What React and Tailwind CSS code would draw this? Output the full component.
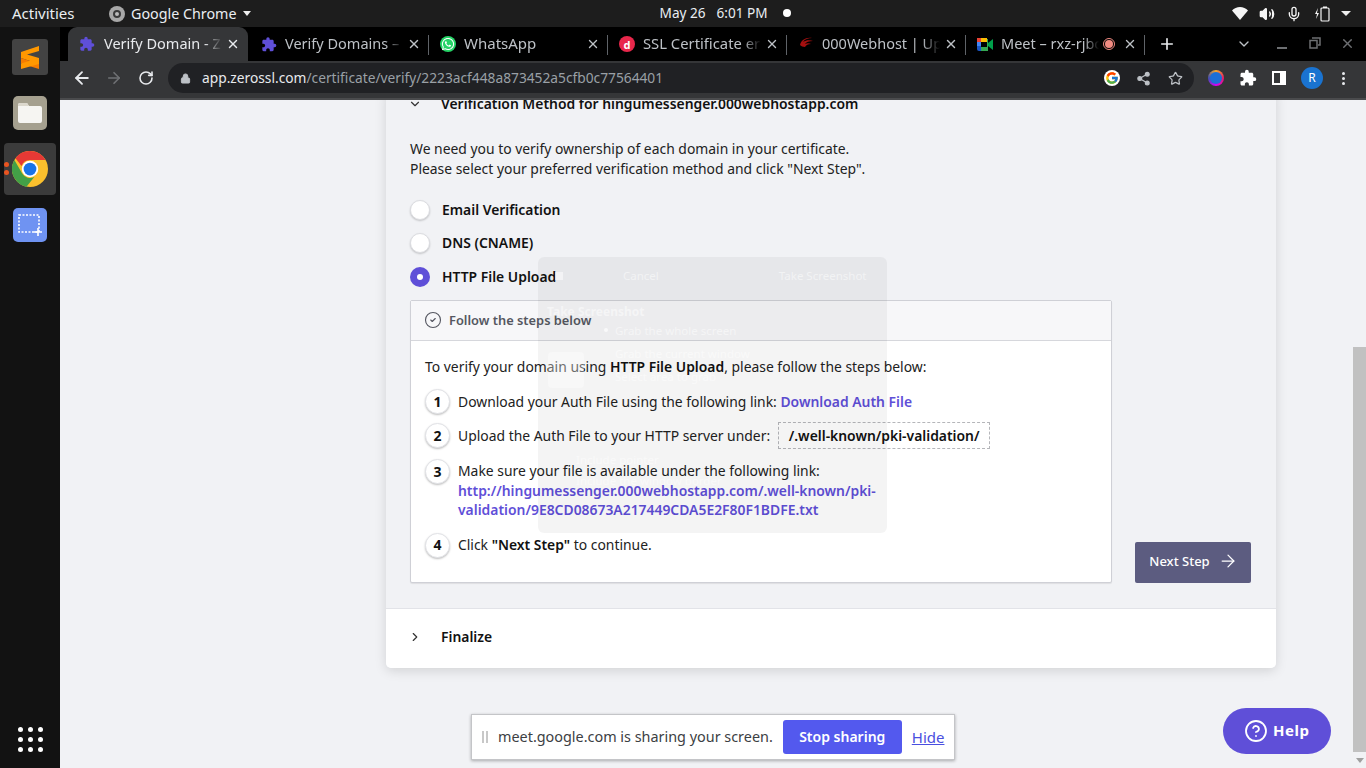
import React from "react";
import { ChevronDown, ChevronRight, X, Plus, ArrowLeft, ArrowRight, RotateCw, Lock, Star, Share2, Mic, Volume2, CircleHelp, CircleCheck } from "lucide-react";
import { MdExtension } from "react-icons/md";
import { FaWhatsapp } from "react-icons/fa";
import { FcGoogle } from "react-icons/fc";

function ChromeLogo({ size = 36 }) {
  return (
    <svg width={size} height={size} viewBox="0 0 48 48">
      <circle cx="24" cy="24" r="24" fill="#fbc02d" />
      <path d="M24 0a24 24 0 0 1 20.8 12H24a12 12 0 0 0-11.3 8L4.6 9.500A24 24 0 0 1 24 0z" fill="#e53935" />
      <path d="M3.200 12 13.600 30a12 12 0 0 0 16.400 4.400L19 48H24A24 24 0 0 1 3.200 12z" fill="#43a047" />
      <circle cx="24" cy="24" r="11" fill="#fff" />
      <circle cx="24" cy="24" r="8.500" fill="#1a73e8" />
    </svg>
  );
}

function Tab({ active, icon, title, extra, sep = true, className = "", titleClass = "text-[14.500px]" }) {
  return (
    <div className={`relative flex h-[34px] shrink-0 items-center pl-[11px] pr-[8px] ${active ? "w-[180px] rounded-t-[9px] bg-[#353638] text-[#e8eaed]" : "w-[179px] text-[#bdc1c6]"} ${className}`}>
      <span className="flex h-4 w-4 shrink-0 items-center justify-center">{icon}</span>
      <span className={`${active ? "ml-[9px]" : "ml-[8px]"} mb-[2px] min-w-0 flex-1 overflow-hidden whitespace-nowrap leading-5 [mask-image:linear-gradient(to_right,black_85%,transparent)] ${titleClass}`}>{title}</span>
      {extra}
      <X size={14} strokeWidth={2.4} className={`ml-1 shrink-0 ${active ? "text-[#e8eaed]" : "text-[#bdc1c6]"}`} />
      {sep && <span className="absolute right-0 top-[8px] h-5 w-px bg-[#5f6368]" />}
    </div>
  );
}

function TopBar() {
  return (
    <div className="flex h-[27px] shrink-0 items-center bg-[#1d1d1d] text-[13.600px] text-[#e9edf2]">
      <span className="ml-3 w-[97px] text-[15px]">Activities</span>
      <span className="flex h-[16px] w-[16px] items-center justify-center rounded-full bg-[#a8a8a8]">
        <span className="h-[8px] w-[8px] rounded-full border-2 border-[#3a3a3a] bg-[#bbb]" />
      </span>
      <span className="ml-[6px] text-[14.300px]">Google Chrome</span>
      <span className="ml-[6px] h-0 w-0 border-x-[4.500px] border-t-[5px] border-x-transparent border-t-[#eee]" />
      <div className="ml-[409px] flex items-center">
        <span>May 26</span>
        <span className="ml-[11px]">6:01 PM</span>
        <span className="ml-[15px] h-2 w-2 rounded-full bg-white" />
      </div>
      <div className="ml-auto mr-[15px] flex items-center">
        <svg width="16" height="13" viewBox="0 0 16 13"><path d="M0 3.500C2 1.500 5 0 8 0s6 1.500 8 3.500L8 13z" fill="#f5f5f5" /></svg>
        <Volume2 size={16} fill="#f5f5f5" className="ml-[11px] text-[#f5f5f5]" />
        <Mic size={16} className="ml-[11px] text-[#f5f5f5]" />
        <svg width="16" height="16" viewBox="0 0 16 16" className="ml-[12px]"><path d="M4 2 1 8h2l-1 5 3-6H3z" fill="#f5f5f5" /><rect x="7" y="2" width="8" height="13" rx="1" fill="none" stroke="#f5f5f5" strokeWidth="1.200" /><rect x="9" y="0.500" width="4" height="1.500" fill="#f5f5f5" /></svg>
        <span className="ml-[11px] h-0 w-0 border-x-[5px] border-t-[5px] border-x-transparent border-t-[#eee]" />
      </div>
    </div>
  );
}

function Dock() {
  return (
    <div className="relative flex w-[60px] shrink-0 flex-col items-center bg-[#121212]">
      <div className="mt-[12px] flex h-9 w-9 items-center justify-center rounded-[3px] bg-[#434343]">
        <svg width="20" height="25" viewBox="0 0 20 25"><path d="M19 1 1 7v6l18 6V13L7 9.500 19 6z" fill="#ff9800" /><path d="M1 13v5.500L19 24v-5z" fill="#f57c00" /><path d="M1 18.500 19 13v6L1 24z" fill="#ff9800" /></svg>
      </div>
      <div className="mt-[21px] flex h-[34px] w-[34px] items-center justify-center rounded-[5px] bg-[#a5a08f]">
        <svg width="26" height="22" viewBox="0 0 26 22"><path d="M1 3a2 2 0 0 1 2-2h7l2 3h11a2 2 0 0 1 2 2v13a2 2 0 0 1-2 2H3a2 2 0 0 1-2-2z" fill="#f6f5f2" /><path d="M1 3a2 2 0 0 1 2-2h7l2 3H1z" fill="#dcd8cd" /></svg>
      </div>
      <div className="relative mt-[13px] flex h-[52px] w-[52px] items-center justify-center rounded-[4px] bg-[#3b3b3b]">
        <ChromeLogo size={36} />
        <span className="absolute left-0 top-[19px] h-[5px] w-[5px] rounded-full bg-[#e95420]" />
        <span className="absolute left-0 top-[27px] h-[5px] w-[5px] rounded-full bg-[#e95420]" />
      </div>
      <div className="mt-[13px] flex h-[34px] w-[34px] items-center justify-center rounded-[5px] bg-[#6f93f2]">
        <svg width="26" height="24" viewBox="0 0 26 24"><rect x="2" y="2" width="20" height="17" fill="none" stroke="#fff" strokeWidth="1.600" strokeDasharray="2 1.500" /><path d="M21 15v8M17 19h8" stroke="#fff" strokeWidth="1.600" /></svg>
      </div>
      <div className="mt-auto mb-[16px] grid grid-cols-3 gap-[5px]">
        {[...Array(9)].map((_, i) => <span key={i} className="h-[5px] w-[5px] rounded-full bg-white" />)}
      </div>
    </div>
  );
}

function TabStrip() {
  return (
    <div className="flex h-[34px] shrink-0 items-end bg-black pl-2">
      <Tab active sep={false} title="Verify Domain - ZeroSSL" icon={<MdExtension size={18} className="text-[#5f4fd8]" />} />
      <Tab className="ml-[2px]" title="Verify Domains – ZeroSSL" icon={<MdExtension size={17} className="text-[#5f4fd8]" />} />
      <Tab title="WhatsApp" titleClass="text-[15px]" icon={<span className="flex h-4 w-4 items-center justify-center rounded-full bg-[#25d366]"><FaWhatsapp size={14} className="text-white" /></span>} />
      <Tab title="SSL Certificate error" titleClass="text-[14.800px]" icon={<span className="flex h-4 w-4 items-center justify-center rounded-full bg-[#e8274b] text-[11px] font-bold leading-none text-white">d</span>} />
      <Tab title="000Webhost | Upload" icon={<svg width="15" height="14" viewBox="0 0 15 14"><path d="M1 8c1-5 6-8 12-7-4 0-7 1-9 4 3-2 7-2 10-1-4 0-7 1-8 3 2-1 4-1 6 0-3 0-5 1-6 3-2 0-4-1-5-2z" fill="#a50f0f" /></svg>} />
      <Tab title="Meet – rxz-rjbc-xyz" extra={<span className="ml-1 mr-[4px] flex h-[12px] w-[12px] shrink-0 items-center justify-center rounded-full border border-[#f28b82]"><span className="h-2 w-2 rounded-full bg-[#f28b82]" /></span>} icon={
        <svg width="16" height="13" viewBox="0 0 16 13"><rect x="0" y="0" width="4" height="8" fill="#4285f4" /><path d="M0 8h4v5H2a2 2 0 0 1-2-2z" fill="#1a56c4" /><path d="M4 0h6v4H4z" fill="#fbbc04" /><path d="M4 9h7v4H4z" fill="#34a853" /><rect x="10" y="1" width="1" height="8" fill="#34a853" /><path d="M11 5l5-4v11l-5-4z" fill="#00a14b" /><path d="M0 0h4v4H0z" fill="#ea4335" /></svg>
      } />
      <Plus size={18} strokeWidth={2.2} className="ml-[13px] mb-[8px] text-[#e8eaed]" />
      <ChevronDown size={16} strokeWidth={2} className="ml-[60px] mb-[9px] text-[#bdc1c6]" />
      <span className="ml-[25px] mb-[12px] h-[2px] w-[10px] bg-[#6d6f72]" />
      <svg width="12" height="12" viewBox="0 0 12 12" className="ml-[22px] mb-[12px]"><path d="M3 1h8v7H9M1 3.500h7V11H1z" fill="none" stroke="#6d6f72" strokeWidth="1.500" /></svg>
      <X size={15} strokeWidth={2.2} className="ml-[19px] mb-[10px] text-[#6d6f72]" />
    </div>
  );
}

function Toolbar() {
  return (
    <div className="flex h-[39px] shrink-0 items-center border-b-2 border-b-[#4a4b4d] bg-[#353638] pb-[3px] text-white">
      <ArrowLeft size={20} strokeWidth={2.2} className="ml-[12px] text-[#e8eaed]" />
      <ArrowRight size={18} strokeWidth={2.2} className="ml-[13px] text-[#6f7174]" />
      <RotateCw size={16} strokeWidth={2.4} className="ml-[15px] text-[#e8eaed]" />
      <div className="ml-[14px] flex h-[30px] w-[1026px] items-center rounded-full bg-[#202124] pl-[12px] pr-[11px]">
        <Lock size={11} fill="#bdc1c6" className="text-[#bdc1c6]" />
        <span className="ml-[11px] text-[13.750px] text-[#e8eaed]">app.zerossl.com<span className="text-[#9aa0a6]">/certificate/verify/2223acf448a873452a5cfb0c77564401</span></span>
        <span className="ml-auto flex h-4 w-4 items-center justify-center rounded-full bg-white"><FcGoogle size={14} /></span>
        <Share2 size={15} className="ml-[16px] text-[#bdc1c6]" fill="#bdc1c6" />
        <Star size={15} strokeWidth={2} className="ml-[17px] text-[#bdc1c6]" />
      </div>
      <span className="ml-[14px] flex h-4 w-4 items-center justify-center rounded-full bg-[conic-gradient(#f9a825,#e91e63,#d500f9,#3f51b5,#f9a825)]"><span className="h-3 w-3 rounded-full bg-[#1d6fd6]" /></span>
      <MdExtension size={18} className="ml-[15px] text-white" />
      <span className="ml-[15px] flex h-[14px] w-[14px] justify-end border-2 border-white bg-[#353638]"><span className="h-full w-[4px] bg-white" /></span>
      <span className="ml-[15px] flex h-[22px] w-[22px] items-center justify-center rounded-full bg-[#1a73d0] text-[12px] text-white">R</span>
      <span className="ml-[19px] flex flex-col gap-[2px]">
        <span className="h-[3px] w-[3px] rounded-full bg-[#e8eaed]" /><span className="h-[3px] w-[3px] rounded-full bg-[#e8eaed]" /><span className="h-[3px] w-[3px] rounded-full bg-[#e8eaed]" />
      </span>
    </div>
  );
}

function Radio({ label, on, className = "" }) {
  return (
    <div className={`flex h-[20px] items-center ${className}`}>
      {on ? (
        <span className="flex h-5 w-5 items-center justify-center rounded-full bg-[#5f4fd8]"><span className="h-[6px] w-[6px] rounded-full bg-white" /></span>
      ) : (
        <span className="h-5 w-5 rounded-full border border-[#dcdde1] bg-white shadow-[0_1px_2px_rgba(0,0,0,0.2)]" />
      )}
      <span className="ml-[12px] font-semibold text-[#111]">{label}</span>
    </div>
  );
}

function Num({ n }) {
  return <span className="flex h-[25px] w-[25px] shrink-0 items-center justify-center rounded-full border border-[#e2e3e7] bg-white text-[14px] font-bold text-[#111] shadow-[0_1px_2px_rgba(0,0,0,0.25)]">{n}</span>;
}

function Card() {
  return (
    <div className="ml-[326px] mt-[-10px] w-[890px] rounded-b-[5px] bg-[#f1f2f5] text-[13.900px] shadow-[0_3px_12px_rgba(0,0,0,0.13)]">
      <div className="flex h-[28px] items-center pl-[22px]">
        <ChevronDown size={14} strokeWidth={2} className="text-[#333]" />
        <span className="ml-[19px] font-semibold text-[#111]">Verification Method for hingumessenger.000webhostapp.com</span>
      </div>
      <div className="border-b border-[#e2e3e8] pb-[25px] pl-[24px] pr-[25px] pt-[21px] leading-5 text-[#222]">
        <p>We need you to verify ownership of each domain in your certificate.</p>
        <p>Please select your preferred verification method and click "Next Step".</p>
        <div className="mt-[21px] flex flex-col gap-[13px]">
          <Radio label="Email Verification" />
          <Radio label="DNS (CNAME)" />
          <Radio label="HTTP File Upload" on className="mt-[1px]" />
        </div>
        <div className="mt-[13px] flex items-end justify-between">
          <div className="w-[702px] rounded-[2px] border border-[#cfd0d6] bg-white shadow-[0_1px_1px_rgba(0,0,0,0.08)]">
            <div className="flex h-[40px] items-center border-b border-[#d6d7dc] bg-[#f7f7f9] pb-[2px] pl-[13px] text-[#555761]">
              <CircleCheck size={18} strokeWidth={1.500} />
              <span className="ml-[7px] text-[12.850px] font-semibold">Follow the steps below</span>
            </div>
            <div className="px-[14px] pb-[24px] pt-[16px] text-[#222]">
              <p>To verify your domain using <b className="font-semibold text-[#111]">HTTP File Upload</b>, please follow the steps below:</p>
              <div className="mt-[12px] flex h-[25px] items-center">
                <Num n="1" />
                <span className="ml-[8px]">Download your Auth File using the following link: <a className="font-semibold text-[#5f4fd8]">Download Auth File</a></span>
              </div>
              <div className="mt-[9px] flex h-[25px] items-center">
                <Num n="2" />
                <span className="ml-[8px]">Upload the Auth File to your HTTP server under:</span>
                <span className="ml-[8px] flex h-[27px] w-[212px] items-center justify-center border border-dashed border-[#b5b6ba] bg-white font-semibold text-[#111]">/.well-known/pki-validation/</span>
              </div>
              <div className="mt-[11px] flex items-start">
                <Num n="3" />
                <div className="ml-[8px] mt-[2px] leading-[19.500px]">
                  <p>Make sure your file is available under the following link:</p>
                  <a className="block w-[440px] font-semibold text-[#5f4fd8]">http://hingumessenger.000webhostapp.com/.well-known/pki-<br />validation/9E8CD08673A217449CDA5E2F80F1BDFE.txt</a>
                </div>
              </div>
              <div className="mt-[13px] flex h-[25px] items-center">
                <Num n="4" />
                <span className="ml-[8px]">Click <b className="font-semibold text-[#111]">"Next Step"</b> to continue.</span>
              </div>
            </div>
          </div>
          <button className="flex h-[41px] w-[116px] items-center justify-center rounded-[2px] bg-[#5c5c80] pb-[2px] pl-[1px] text-[13px] font-medium text-white">
            Next Step
            <ArrowRight size={20} strokeWidth={1.500} className="ml-[8px]" />
          </button>
        </div>
      </div>
      <div className="flex h-[59px] items-center rounded-b-[5px] bg-white pb-[2px] pl-[22px]">
        <ChevronRight size={14} strokeWidth={2} className="text-[#333]" />
        <span className="ml-[19px] font-semibold text-[#111]">Finalize</span>
      </div>
    </div>
  );
}

function Ghost() {
  return (
    <div className="pointer-events-none absolute left-[478px] top-[157px] h-[276px] w-[349px] rounded-[6px] bg-[rgba(0,0,0,0.045)] text-[11.500px] text-white/50">
      <div className="flex h-[38px] items-center pl-[85px]">
        <span>Cancel</span>
        <span className="ml-[120px]">Take Screenshot</span>
      </div>
      <span className="absolute left-[17px] top-[15px] h-[8px] w-[8px] bg-white/50" />
      <div className="ml-[9px] mt-[8px] text-[12px] font-bold">Take Screenshot</div>
      <div className="relative ml-[77px] mt-[1px] flex flex-col gap-[6px] leading-[17px]">
        <span>Grab the whole screen</span>
        <span>Grab the current window</span>
        <span>Select area to grab</span>
        <span className="absolute left-[-11px] top-[6px] h-[4px] w-[4px] rounded-full bg-white/70" />
        <span className="absolute left-[-67px] top-[30px] h-[36px] w-[36px] rounded-[4px] bg-white/35" />
      </div>
      <div className="ml-[38px] mt-[66px] leading-[17px]">Include pointer</div>
      <div className="ml-[38px] mt-[4px] leading-[17px]">Include the window border</div>
    </div>
  );
}

function Scrollbar() {
  return (
    <div className="flex w-[13px] shrink-0 flex-col bg-[#f1f2f5]">
      <div className="h-[247px]" />
      <div className="h-[405px] bg-[#c1c1c1]" />
      <div className="flex flex-1 items-center justify-center"><span className="h-0 w-0 border-x-[4px] border-t-[5px] border-x-transparent border-t-[#a0a0a0]" /></div>
    </div>
  );
}

export default function App() {
  return (
    <div className="flex h-[768px] w-[1366px] flex-col overflow-hidden bg-[#f1f2f5] font-['Noto_Sans',sans-serif]">
      <TopBar />
      <div className="flex min-h-0 flex-1">
        <Dock />
        <div className="flex min-w-0 flex-1 flex-col">
          <TabStrip />
          <Toolbar />
          <div className="relative flex min-h-0 flex-1 overflow-hidden">
            <div className="min-w-0 flex-1 overflow-hidden"><Card /></div>
            <Scrollbar />
            <Ghost />
            <div className="absolute left-[411px] top-[614px] flex h-[46px] w-[484px] items-center border border-[#c4c5c8] bg-white pl-[10px] shadow-[0_1px_3px_rgba(0,0,0,0.3)]">
              <span className="h-[12px] w-[2px] bg-[#c8c8c8]" />
              <span className="ml-[2px] h-[12px] w-[2px] bg-[#c8c8c8]" />
              <span className="ml-[10px] text-[14.400px] text-[#3c4043]">meet.google.com is sharing your screen.</span>
              <button className="ml-[10px] flex h-[34px] w-[119px] items-center justify-center rounded-[3px] bg-[#5359ee] pb-[1px] text-[14px] font-semibold text-white">Stop sharing</button>
              <a className="ml-[10px] text-[15px] text-[#4a4fe0] underline">Hide</a>
            </div>
            <div className="absolute left-[1163px] top-[608px] flex h-[46px] w-[108px] items-center rounded-full bg-[#5f4fd8] pl-[21px] text-[15px] font-bold tracking-[0.5px] text-white">
              <CircleHelp size={24} strokeWidth={1.800} />
              <span className="ml-[5px] mb-[1px]">Help</span>
            </div>
          </div>
        </div>
      </div>
    </div>
  );
}
